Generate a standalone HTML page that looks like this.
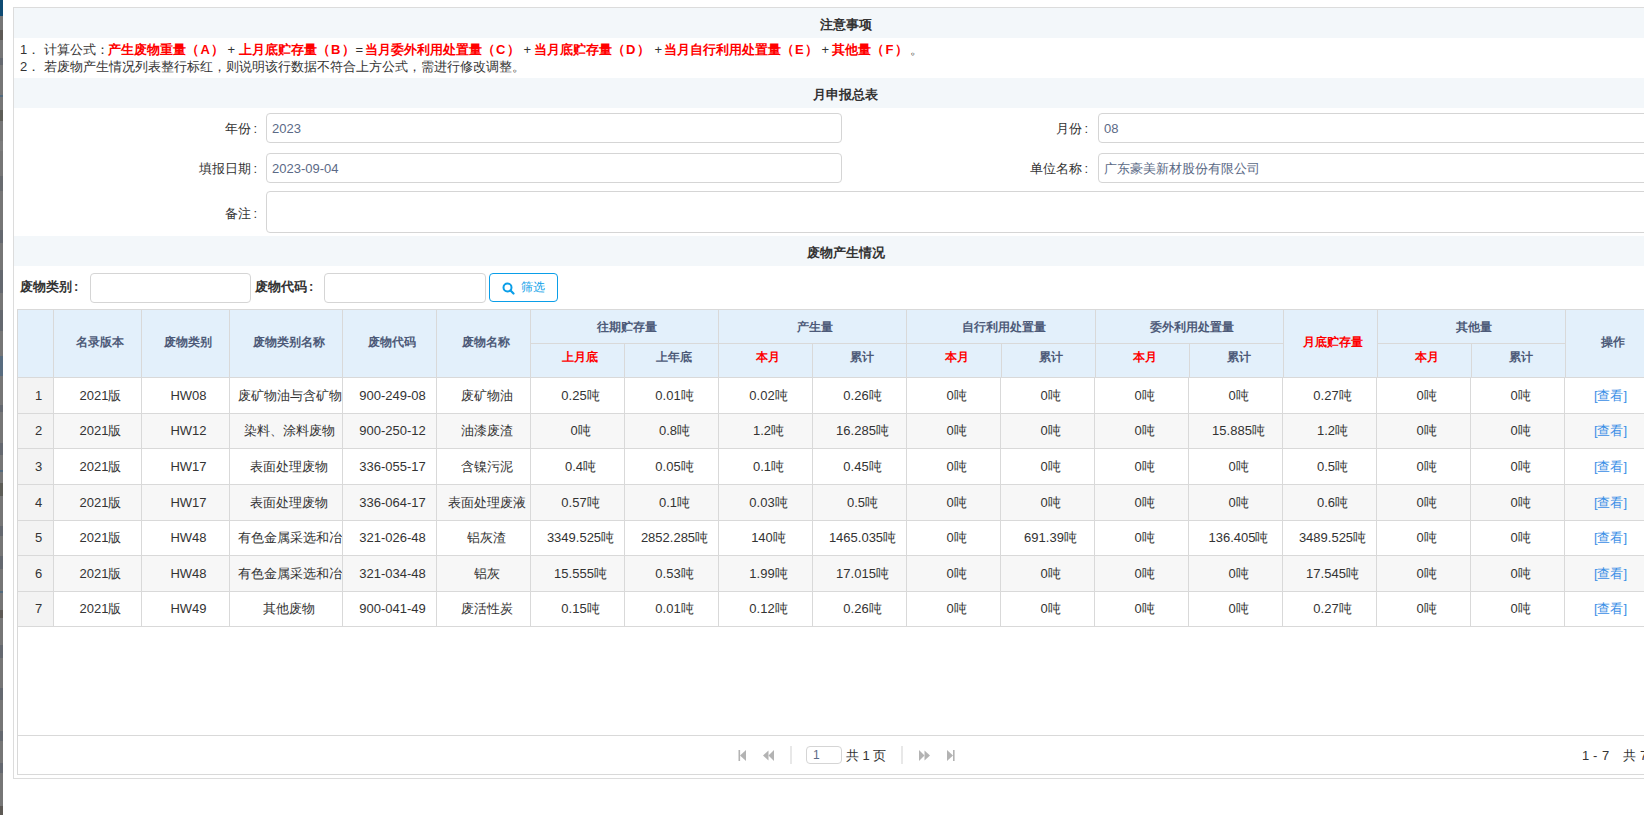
<!DOCTYPE html><html><head><meta charset="utf-8"><style>
*{box-sizing:border-box;margin:0;padding:0}
html,body{width:1644px;height:815px;overflow:hidden;background:#fff}
body{position:relative;font-family:"Liberation Sans",sans-serif;font-size:13px;color:#333333}
.a{position:absolute}
.band{position:absolute;left:14px;width:1663px;height:30px;background:#f3f7fa;text-align:center;font-weight:bold;font-size:13px;line-height:30px;padding-top:2px;color:#333}
.lbl{position:absolute;text-align:right;font-size:13px;line-height:30px;color:#333;white-space:nowrap}
.inp{position:absolute;border:1px solid #d5d5d5;border-radius:4px;background:#fff;color:#5b6a86;font-size:13px;line-height:28px;padding-left:5px;padding-top:1px;white-space:nowrap;overflow:hidden}
.c{position:absolute;text-align:center;white-space:nowrap;overflow:hidden}
.h{color:#4d5a78;font-weight:bold;font-size:12px}
.r{color:#ff0000}
.vl{position:absolute;width:1px;background:#d9d9d9}
.hl{position:absolute;height:1px;background:#d9d9d9}
.red{color:#ff0000;font-weight:bold}
</style></head><body>
<div class="a" style="left:0;top:0;width:3px;height:815px;background:#767676"></div>
<div class="a" style="left:0;top:0;width:3px;height:16px;background:#0f4b73"></div>
<div class="a" style="left:0;top:30px;width:3px;height:10px;background:#3a3026;opacity:.4"></div>
<div class="a" style="left:0;top:58px;width:3px;height:7px;background:#4a5566;opacity:.4"></div>
<div class="a" style="left:0;top:95px;width:3px;height:2px;background:#1e5a8a;opacity:.4"></div>
<div class="a" style="left:0;top:110px;width:3px;height:11px;background:#3a3a2a;opacity:.4"></div>
<div class="a" style="left:0;top:141px;width:3px;height:10px;background:#888;opacity:.4"></div>
<div class="a" style="left:0;top:176px;width:3px;height:15px;background:#555c66;opacity:.4"></div>
<div class="a" style="left:0;top:230px;width:3px;height:13px;background:#4a5566;opacity:.4"></div>
<div class="a" style="left:0;top:270px;width:3px;height:23px;background:#4a5566;opacity:.4"></div>
<div class="a" style="left:0;top:310px;width:3px;height:21px;background:#4a5566;opacity:.4"></div>
<div class="a" style="left:0;top:356px;width:3px;height:20px;background:#2e5f8e;opacity:.4"></div>
<div class="a" style="left:0;top:405px;width:3px;height:7px;background:#4a5566;opacity:.4"></div>
<div class="a" style="left:0;top:443px;width:3px;height:12px;background:#4a5566;opacity:.4"></div>
<div class="a" style="left:0;top:470px;width:3px;height:2px;background:#1e5a8a;opacity:.4"></div>
<div class="a" style="left:0;top:483px;width:3px;height:13px;background:#3a3a2a;opacity:.4"></div>
<div class="a" style="left:0;top:526px;width:3px;height:10px;background:#4a5566;opacity:.4"></div>
<div class="a" style="left:0;top:556px;width:3px;height:13px;background:#4a5566;opacity:.4"></div>
<div class="a" style="left:0;top:591px;width:3px;height:2px;background:#1e5a8a;opacity:.4"></div>
<div class="a" style="left:0;top:610px;width:3px;height:8px;background:#3a3026;opacity:.4"></div>
<div class="a" style="left:0;top:645px;width:3px;height:13px;background:#4a5566;opacity:.4"></div>
<div class="a" style="left:0;top:688px;width:3px;height:12px;background:#4a5566;opacity:.4"></div>
<div class="a" style="left:0;top:731px;width:3px;height:10px;background:#4a5566;opacity:.4"></div>
<div class="a" style="left:0;top:763px;width:3px;height:10px;background:#4a5566;opacity:.4"></div>
<div class="a" style="left:0;top:806px;width:3px;height:9px;background:#3a3026;opacity:.4"></div>
<div class="a" style="left:13px;top:7px;width:1665px;height:772px;border:1px solid #dcdcdc"></div>
<div class="band" style="top:8px">注意事项</div>
<div class="band" style="top:78px">月申报总表</div>
<div class="band" style="top:236px">废物产生情况</div>
<span class="a" style="left:20px;top:41px;line-height:17px;white-space:nowrap">1．</span>
<span class="a" style="left:43.5px;top:41px;line-height:17px;white-space:nowrap">计算公式：</span>
<span class="a red" style="left:108px;top:41px;line-height:17px;white-space:nowrap">产生废物重量<span style="letter-spacing:1.5px">（A）</span></span>
<span class="a" style="left:227.5px;top:41px;line-height:17px;white-space:nowrap">+</span>
<span class="a red" style="left:238.5px;top:41px;line-height:17px;white-space:nowrap">上月底贮存量<span style="letter-spacing:1.5px">（B）</span></span>
<span class="a" style="left:355.5px;top:41px;line-height:17px;white-space:nowrap">=</span>
<span class="a red" style="left:364.5px;top:41px;line-height:17px;white-space:nowrap">当月委外利用处置量<span style="letter-spacing:1.5px">（C）</span></span>
<span class="a" style="left:523.5px;top:41px;line-height:17px;white-space:nowrap">+</span>
<span class="a red" style="left:533.5px;top:41px;line-height:17px;white-space:nowrap">当月底贮存量<span style="letter-spacing:1.5px">（D）</span></span>
<span class="a" style="left:654.5px;top:41px;line-height:17px;white-space:nowrap">+</span>
<span class="a red" style="left:663.5px;top:41px;line-height:17px;white-space:nowrap">当月自行利用处置量<span style="letter-spacing:1.5px">（E）</span></span>
<span class="a" style="left:821.5px;top:41px;line-height:17px;white-space:nowrap">+</span>
<span class="a red" style="left:832px;top:41px;line-height:17px;white-space:nowrap">其他量<span style="letter-spacing:1.5px">（F）</span></span>
<span class="a" style="left:909.5px;top:41px;line-height:17px;white-space:nowrap">。</span>
<span class="a" style="left:20px;top:58px;line-height:17px;white-space:nowrap">2．</span>
<span class="a" style="left:43.5px;top:58px;line-height:17px;white-space:nowrap">若废物产生情况列表整行标红，则说明该行数据不符合上方公式，需进行修改调整。</span>
<div class="lbl" style="right:1387px;top:114px">年份<span style="margin-left:2px">:</span></div>
<div class="inp" style="left:266px;top:113px;width:576px;height:30px">2023</div>
<div class="lbl" style="right:556px;top:114px">月份<span style="margin-left:2px">:</span></div>
<div class="inp" style="left:1098px;top:113px;width:600px;height:30px">08</div>
<div class="lbl" style="right:1387px;top:154px">填报日期<span style="margin-left:2px">:</span></div>
<div class="inp" style="left:266px;top:153px;width:576px;height:30px">2023-09-04</div>
<div class="lbl" style="right:556px;top:154px">单位名称<span style="margin-left:2px">:</span></div>
<div class="inp" style="left:1098px;top:153px;width:600px;height:30px">广东豪美新材股份有限公司</div>
<div class="lbl" style="right:1387px;top:199px">备注<span style="margin-left:2px">:</span></div>
<div class="inp" style="left:266px;top:191px;width:1420px;height:42px"></div>
<div class="a" style="left:20px;top:272px;line-height:30px;font-weight:bold;font-size:13px">废物类别<span style="margin-left:2px">:</span></div>
<div class="inp" style="left:90px;top:273px;width:161px;height:30px"></div>
<div class="a" style="left:255px;top:272px;line-height:30px;font-weight:bold;font-size:13px">废物代码<span style="margin-left:2px">:</span></div>
<div class="inp" style="left:324px;top:273px;width:162px;height:30px"></div>
<div class="a" style="left:489px;top:273px;width:69px;height:29px;border:1px solid #0a9ee8;border-radius:4px;color:#0a9ee8;font-size:12px;line-height:27px"><svg class="a" style="left:12px;top:8px" width="13" height="13" viewBox="0 0 13 13"><circle cx="5.5" cy="5.5" r="4" fill="none" stroke="#0a9ee8" stroke-width="2"/><line x1="8.5" y1="8.5" x2="11.5" y2="11.5" stroke="#0a9ee8" stroke-width="2.2" stroke-linecap="round"/></svg><span class="a" style="left:31px;top:0">筛选</span></div>
<div class="a" style="left:17px;top:309px;width:1700px;height:466px;border:1px solid #d9d9d9"></div>
<div class="a" style="left:18px;top:310px;width:1700px;height:67px;background:#e3f0fb"></div>
<div class="hl" style="left:18px;top:377px;width:1700px"></div>
<div class="hl" style="left:531px;top:343px;width:187px"></div>
<div class="hl" style="left:719px;top:343px;width:187px"></div>
<div class="hl" style="left:907px;top:343px;width:188px"></div>
<div class="hl" style="left:1096px;top:343px;width:187px"></div>
<div class="hl" style="left:1378px;top:343px;width:187px"></div>
<div class="vl" style="left:53px;top:310px;height:67px"></div>
<div class="vl" style="left:141px;top:310px;height:67px"></div>
<div class="vl" style="left:229px;top:310px;height:67px"></div>
<div class="vl" style="left:342px;top:310px;height:67px"></div>
<div class="vl" style="left:436px;top:310px;height:67px"></div>
<div class="vl" style="left:530px;top:310px;height:67px"></div>
<div class="vl" style="left:718px;top:310px;height:67px"></div>
<div class="vl" style="left:906px;top:310px;height:67px"></div>
<div class="vl" style="left:1095px;top:310px;height:67px"></div>
<div class="vl" style="left:1283px;top:310px;height:67px"></div>
<div class="vl" style="left:1377px;top:310px;height:67px"></div>
<div class="vl" style="left:1565px;top:310px;height:67px"></div>
<div class="vl" style="left:624px;top:344px;height:33px"></div>
<div class="vl" style="left:812px;top:344px;height:33px"></div>
<div class="vl" style="left:1001px;top:344px;height:33px"></div>
<div class="vl" style="left:1189px;top:344px;height:33px"></div>
<div class="vl" style="left:1471px;top:344px;height:33px"></div>
<div class="c h" style="left:54px;top:309px;width:87px;height:67px;line-height:67px;padding-left:5px">名录版本</div>
<div class="c h" style="left:142px;top:309px;width:87px;height:67px;line-height:67px;padding-left:5px">废物类别</div>
<div class="c h" style="left:230px;top:309px;width:112px;height:67px;line-height:67px;padding-left:5px">废物类别名称</div>
<div class="c h" style="left:343px;top:309px;width:93px;height:67px;line-height:67px;padding-left:5px">废物代码</div>
<div class="c h" style="left:437px;top:309px;width:93px;height:67px;line-height:67px;padding-left:5px">废物名称</div>
<div class="c h" style="left:531px;top:311px;width:187px;height:33px;line-height:33px;padding-left:5px">往期贮存量</div>
<div class="c h r" style="left:531px;top:341px;width:93px;height:33px;line-height:33px;padding-left:5px">上月底</div>
<div class="c h" style="left:625px;top:341px;width:93px;height:33px;line-height:33px;padding-left:5px">上年底</div>
<div class="c h" style="left:719px;top:311px;width:187px;height:33px;line-height:33px;padding-left:5px">产生量</div>
<div class="c h r" style="left:719px;top:341px;width:93px;height:33px;line-height:33px;padding-left:5px">本月</div>
<div class="c h" style="left:813px;top:341px;width:93px;height:33px;line-height:33px;padding-left:5px">累计</div>
<div class="c h" style="left:907px;top:311px;width:188px;height:33px;line-height:33px;padding-left:5px">自行利用处置量</div>
<div class="c h r" style="left:907px;top:341px;width:94px;height:33px;line-height:33px;padding-left:5px">本月</div>
<div class="c h" style="left:1002px;top:341px;width:93px;height:33px;line-height:33px;padding-left:5px">累计</div>
<div class="c h" style="left:1096px;top:311px;width:187px;height:33px;line-height:33px;padding-left:5px">委外利用处置量</div>
<div class="c h r" style="left:1096px;top:341px;width:93px;height:33px;line-height:33px;padding-left:5px">本月</div>
<div class="c h" style="left:1190px;top:341px;width:93px;height:33px;line-height:33px;padding-left:5px">累计</div>
<div class="c h r" style="left:1284px;top:309px;width:93px;height:67px;line-height:67px;padding-left:5px">月底贮存量</div>
<div class="c h" style="left:1378px;top:311px;width:187px;height:33px;line-height:33px;padding-left:5px">其他量</div>
<div class="c h r" style="left:1378px;top:341px;width:93px;height:33px;line-height:33px;padding-left:5px">本月</div>
<div class="c h" style="left:1472px;top:341px;width:93px;height:33px;line-height:33px;padding-left:5px">累计</div>
<div class="c h" style="left:1566px;top:309px;width:88px;height:67px;line-height:67px;padding-left:5px">操作</div>
<div class="a" style="left:54px;top:378px;width:1700px;height:35px;background:#ffffff"></div>
<div class="a" style="left:18px;top:378px;width:35px;height:35px;background:#f3f3f3"></div>
<div class="c" style="left:24px;top:378px;width:29px;height:35px;line-height:35px">1</div>
<div class="c" style="left:54px;top:378px;width:87px;height:35px;line-height:35px;padding-left:6px">2021版</div>
<div class="c" style="left:142px;top:378px;width:87px;height:35px;line-height:35px;padding-left:6px">HW08</div>
<div class="c" style="left:230px;top:378px;width:112px;height:35px;line-height:35px;padding:0 2px 0 8px">废矿物油与含矿物油废物</div>
<div class="c" style="left:343px;top:378px;width:93px;height:35px;line-height:35px;padding-left:6px">900-249-08</div>
<div class="c" style="left:437px;top:378px;width:93px;height:35px;line-height:35px;padding-left:6px">废矿物油</div>
<div class="c" style="left:531px;top:378px;width:93px;height:35px;line-height:35px;padding-left:6px">0.25吨</div>
<div class="c" style="left:625px;top:378px;width:93px;height:35px;line-height:35px;padding-left:6px">0.01吨</div>
<div class="c" style="left:719px;top:378px;width:93px;height:35px;line-height:35px;padding-left:6px">0.02吨</div>
<div class="c" style="left:813px;top:378px;width:93px;height:35px;line-height:35px;padding-left:6px">0.26吨</div>
<div class="c" style="left:907px;top:378px;width:93px;height:35px;line-height:35px;padding-left:6px">0吨</div>
<div class="c" style="left:1001px;top:378px;width:93px;height:35px;line-height:35px;padding-left:6px">0吨</div>
<div class="c" style="left:1095px;top:378px;width:93px;height:35px;line-height:35px;padding-left:6px">0吨</div>
<div class="c" style="left:1189px;top:378px;width:93px;height:35px;line-height:35px;padding-left:6px">0吨</div>
<div class="c" style="left:1283px;top:378px;width:93px;height:35px;line-height:35px;padding-left:6px">0.27吨</div>
<div class="c" style="left:1377px;top:378px;width:93px;height:35px;line-height:35px;padding-left:6px">0吨</div>
<div class="c" style="left:1471px;top:378px;width:93px;height:35px;line-height:35px;padding-left:6px">0吨</div>
<div class="c" style="left:1564px;top:378px;width:93px;height:35px;line-height:35px;color:#3a8ee6">[查看]</div>
<div class="hl" style="left:18px;top:413px;width:1700px"></div>
<div class="a" style="left:54px;top:414px;width:1700px;height:34px;background:#f7f7f7"></div>
<div class="a" style="left:18px;top:414px;width:35px;height:34px;background:#f3f3f3"></div>
<div class="c" style="left:24px;top:414px;width:29px;height:34px;line-height:34px">2</div>
<div class="c" style="left:54px;top:414px;width:87px;height:34px;line-height:34px;padding-left:6px">2021版</div>
<div class="c" style="left:142px;top:414px;width:87px;height:34px;line-height:34px;padding-left:6px">HW12</div>
<div class="c" style="left:230px;top:414px;width:112px;height:34px;line-height:34px;padding:0 2px 0 8px">染料、涂料废物</div>
<div class="c" style="left:343px;top:414px;width:93px;height:34px;line-height:34px;padding-left:6px">900-250-12</div>
<div class="c" style="left:437px;top:414px;width:93px;height:34px;line-height:34px;padding-left:6px">油漆废渣</div>
<div class="c" style="left:531px;top:414px;width:93px;height:34px;line-height:34px;padding-left:6px">0吨</div>
<div class="c" style="left:625px;top:414px;width:93px;height:34px;line-height:34px;padding-left:6px">0.8吨</div>
<div class="c" style="left:719px;top:414px;width:93px;height:34px;line-height:34px;padding-left:6px">1.2吨</div>
<div class="c" style="left:813px;top:414px;width:93px;height:34px;line-height:34px;padding-left:6px">16.285吨</div>
<div class="c" style="left:907px;top:414px;width:93px;height:34px;line-height:34px;padding-left:6px">0吨</div>
<div class="c" style="left:1001px;top:414px;width:93px;height:34px;line-height:34px;padding-left:6px">0吨</div>
<div class="c" style="left:1095px;top:414px;width:93px;height:34px;line-height:34px;padding-left:6px">0吨</div>
<div class="c" style="left:1189px;top:414px;width:93px;height:34px;line-height:34px;padding-left:6px">15.885吨</div>
<div class="c" style="left:1283px;top:414px;width:93px;height:34px;line-height:34px;padding-left:6px">1.2吨</div>
<div class="c" style="left:1377px;top:414px;width:93px;height:34px;line-height:34px;padding-left:6px">0吨</div>
<div class="c" style="left:1471px;top:414px;width:93px;height:34px;line-height:34px;padding-left:6px">0吨</div>
<div class="c" style="left:1564px;top:414px;width:93px;height:34px;line-height:34px;color:#3a8ee6">[查看]</div>
<div class="hl" style="left:18px;top:448px;width:1700px"></div>
<div class="a" style="left:54px;top:449px;width:1700px;height:35px;background:#ffffff"></div>
<div class="a" style="left:18px;top:449px;width:35px;height:35px;background:#f3f3f3"></div>
<div class="c" style="left:24px;top:449px;width:29px;height:35px;line-height:35px">3</div>
<div class="c" style="left:54px;top:449px;width:87px;height:35px;line-height:35px;padding-left:6px">2021版</div>
<div class="c" style="left:142px;top:449px;width:87px;height:35px;line-height:35px;padding-left:6px">HW17</div>
<div class="c" style="left:230px;top:449px;width:112px;height:35px;line-height:35px;padding:0 2px 0 8px">表面处理废物</div>
<div class="c" style="left:343px;top:449px;width:93px;height:35px;line-height:35px;padding-left:6px">336-055-17</div>
<div class="c" style="left:437px;top:449px;width:93px;height:35px;line-height:35px;padding-left:6px">含镍污泥</div>
<div class="c" style="left:531px;top:449px;width:93px;height:35px;line-height:35px;padding-left:6px">0.4吨</div>
<div class="c" style="left:625px;top:449px;width:93px;height:35px;line-height:35px;padding-left:6px">0.05吨</div>
<div class="c" style="left:719px;top:449px;width:93px;height:35px;line-height:35px;padding-left:6px">0.1吨</div>
<div class="c" style="left:813px;top:449px;width:93px;height:35px;line-height:35px;padding-left:6px">0.45吨</div>
<div class="c" style="left:907px;top:449px;width:93px;height:35px;line-height:35px;padding-left:6px">0吨</div>
<div class="c" style="left:1001px;top:449px;width:93px;height:35px;line-height:35px;padding-left:6px">0吨</div>
<div class="c" style="left:1095px;top:449px;width:93px;height:35px;line-height:35px;padding-left:6px">0吨</div>
<div class="c" style="left:1189px;top:449px;width:93px;height:35px;line-height:35px;padding-left:6px">0吨</div>
<div class="c" style="left:1283px;top:449px;width:93px;height:35px;line-height:35px;padding-left:6px">0.5吨</div>
<div class="c" style="left:1377px;top:449px;width:93px;height:35px;line-height:35px;padding-left:6px">0吨</div>
<div class="c" style="left:1471px;top:449px;width:93px;height:35px;line-height:35px;padding-left:6px">0吨</div>
<div class="c" style="left:1564px;top:449px;width:93px;height:35px;line-height:35px;color:#3a8ee6">[查看]</div>
<div class="hl" style="left:18px;top:484px;width:1700px"></div>
<div class="a" style="left:54px;top:485px;width:1700px;height:35px;background:#f7f7f7"></div>
<div class="a" style="left:18px;top:485px;width:35px;height:35px;background:#f3f3f3"></div>
<div class="c" style="left:24px;top:485px;width:29px;height:35px;line-height:35px">4</div>
<div class="c" style="left:54px;top:485px;width:87px;height:35px;line-height:35px;padding-left:6px">2021版</div>
<div class="c" style="left:142px;top:485px;width:87px;height:35px;line-height:35px;padding-left:6px">HW17</div>
<div class="c" style="left:230px;top:485px;width:112px;height:35px;line-height:35px;padding:0 2px 0 8px">表面处理废物</div>
<div class="c" style="left:343px;top:485px;width:93px;height:35px;line-height:35px;padding-left:6px">336-064-17</div>
<div class="c" style="left:437px;top:485px;width:93px;height:35px;line-height:35px;padding-left:6px">表面处理废液</div>
<div class="c" style="left:531px;top:485px;width:93px;height:35px;line-height:35px;padding-left:6px">0.57吨</div>
<div class="c" style="left:625px;top:485px;width:93px;height:35px;line-height:35px;padding-left:6px">0.1吨</div>
<div class="c" style="left:719px;top:485px;width:93px;height:35px;line-height:35px;padding-left:6px">0.03吨</div>
<div class="c" style="left:813px;top:485px;width:93px;height:35px;line-height:35px;padding-left:6px">0.5吨</div>
<div class="c" style="left:907px;top:485px;width:93px;height:35px;line-height:35px;padding-left:6px">0吨</div>
<div class="c" style="left:1001px;top:485px;width:93px;height:35px;line-height:35px;padding-left:6px">0吨</div>
<div class="c" style="left:1095px;top:485px;width:93px;height:35px;line-height:35px;padding-left:6px">0吨</div>
<div class="c" style="left:1189px;top:485px;width:93px;height:35px;line-height:35px;padding-left:6px">0吨</div>
<div class="c" style="left:1283px;top:485px;width:93px;height:35px;line-height:35px;padding-left:6px">0.6吨</div>
<div class="c" style="left:1377px;top:485px;width:93px;height:35px;line-height:35px;padding-left:6px">0吨</div>
<div class="c" style="left:1471px;top:485px;width:93px;height:35px;line-height:35px;padding-left:6px">0吨</div>
<div class="c" style="left:1564px;top:485px;width:93px;height:35px;line-height:35px;color:#3a8ee6">[查看]</div>
<div class="hl" style="left:18px;top:520px;width:1700px"></div>
<div class="a" style="left:54px;top:521px;width:1700px;height:34px;background:#ffffff"></div>
<div class="a" style="left:18px;top:521px;width:35px;height:34px;background:#f3f3f3"></div>
<div class="c" style="left:24px;top:521px;width:29px;height:34px;line-height:34px">5</div>
<div class="c" style="left:54px;top:521px;width:87px;height:34px;line-height:34px;padding-left:6px">2021版</div>
<div class="c" style="left:142px;top:521px;width:87px;height:34px;line-height:34px;padding-left:6px">HW48</div>
<div class="c" style="left:230px;top:521px;width:112px;height:34px;line-height:34px;padding:0 2px 0 8px">有色金属采选和冶炼废物</div>
<div class="c" style="left:343px;top:521px;width:93px;height:34px;line-height:34px;padding-left:6px">321-026-48</div>
<div class="c" style="left:437px;top:521px;width:93px;height:34px;line-height:34px;padding-left:6px">铝灰渣</div>
<div class="c" style="left:531px;top:521px;width:93px;height:34px;line-height:34px;padding-left:6px">3349.525吨</div>
<div class="c" style="left:625px;top:521px;width:93px;height:34px;line-height:34px;padding-left:6px">2852.285吨</div>
<div class="c" style="left:719px;top:521px;width:93px;height:34px;line-height:34px;padding-left:6px">140吨</div>
<div class="c" style="left:813px;top:521px;width:93px;height:34px;line-height:34px;padding-left:6px">1465.035吨</div>
<div class="c" style="left:907px;top:521px;width:93px;height:34px;line-height:34px;padding-left:6px">0吨</div>
<div class="c" style="left:1001px;top:521px;width:93px;height:34px;line-height:34px;padding-left:6px">691.39吨</div>
<div class="c" style="left:1095px;top:521px;width:93px;height:34px;line-height:34px;padding-left:6px">0吨</div>
<div class="c" style="left:1189px;top:521px;width:93px;height:34px;line-height:34px;padding-left:6px">136.405吨</div>
<div class="c" style="left:1283px;top:521px;width:93px;height:34px;line-height:34px;padding-left:6px">3489.525吨</div>
<div class="c" style="left:1377px;top:521px;width:93px;height:34px;line-height:34px;padding-left:6px">0吨</div>
<div class="c" style="left:1471px;top:521px;width:93px;height:34px;line-height:34px;padding-left:6px">0吨</div>
<div class="c" style="left:1564px;top:521px;width:93px;height:34px;line-height:34px;color:#3a8ee6">[查看]</div>
<div class="hl" style="left:18px;top:555px;width:1700px"></div>
<div class="a" style="left:54px;top:556px;width:1700px;height:35px;background:#f7f7f7"></div>
<div class="a" style="left:18px;top:556px;width:35px;height:35px;background:#f3f3f3"></div>
<div class="c" style="left:24px;top:556px;width:29px;height:35px;line-height:35px">6</div>
<div class="c" style="left:54px;top:556px;width:87px;height:35px;line-height:35px;padding-left:6px">2021版</div>
<div class="c" style="left:142px;top:556px;width:87px;height:35px;line-height:35px;padding-left:6px">HW48</div>
<div class="c" style="left:230px;top:556px;width:112px;height:35px;line-height:35px;padding:0 2px 0 8px">有色金属采选和冶炼废物</div>
<div class="c" style="left:343px;top:556px;width:93px;height:35px;line-height:35px;padding-left:6px">321-034-48</div>
<div class="c" style="left:437px;top:556px;width:93px;height:35px;line-height:35px;padding-left:6px">铝灰</div>
<div class="c" style="left:531px;top:556px;width:93px;height:35px;line-height:35px;padding-left:6px">15.555吨</div>
<div class="c" style="left:625px;top:556px;width:93px;height:35px;line-height:35px;padding-left:6px">0.53吨</div>
<div class="c" style="left:719px;top:556px;width:93px;height:35px;line-height:35px;padding-left:6px">1.99吨</div>
<div class="c" style="left:813px;top:556px;width:93px;height:35px;line-height:35px;padding-left:6px">17.015吨</div>
<div class="c" style="left:907px;top:556px;width:93px;height:35px;line-height:35px;padding-left:6px">0吨</div>
<div class="c" style="left:1001px;top:556px;width:93px;height:35px;line-height:35px;padding-left:6px">0吨</div>
<div class="c" style="left:1095px;top:556px;width:93px;height:35px;line-height:35px;padding-left:6px">0吨</div>
<div class="c" style="left:1189px;top:556px;width:93px;height:35px;line-height:35px;padding-left:6px">0吨</div>
<div class="c" style="left:1283px;top:556px;width:93px;height:35px;line-height:35px;padding-left:6px">17.545吨</div>
<div class="c" style="left:1377px;top:556px;width:93px;height:35px;line-height:35px;padding-left:6px">0吨</div>
<div class="c" style="left:1471px;top:556px;width:93px;height:35px;line-height:35px;padding-left:6px">0吨</div>
<div class="c" style="left:1564px;top:556px;width:93px;height:35px;line-height:35px;color:#3a8ee6">[查看]</div>
<div class="hl" style="left:18px;top:591px;width:1700px"></div>
<div class="a" style="left:54px;top:592px;width:1700px;height:34px;background:#ffffff"></div>
<div class="a" style="left:18px;top:592px;width:35px;height:34px;background:#f3f3f3"></div>
<div class="c" style="left:24px;top:592px;width:29px;height:34px;line-height:34px">7</div>
<div class="c" style="left:54px;top:592px;width:87px;height:34px;line-height:34px;padding-left:6px">2021版</div>
<div class="c" style="left:142px;top:592px;width:87px;height:34px;line-height:34px;padding-left:6px">HW49</div>
<div class="c" style="left:230px;top:592px;width:112px;height:34px;line-height:34px;padding:0 2px 0 8px">其他废物</div>
<div class="c" style="left:343px;top:592px;width:93px;height:34px;line-height:34px;padding-left:6px">900-041-49</div>
<div class="c" style="left:437px;top:592px;width:93px;height:34px;line-height:34px;padding-left:6px">废活性炭</div>
<div class="c" style="left:531px;top:592px;width:93px;height:34px;line-height:34px;padding-left:6px">0.15吨</div>
<div class="c" style="left:625px;top:592px;width:93px;height:34px;line-height:34px;padding-left:6px">0.01吨</div>
<div class="c" style="left:719px;top:592px;width:93px;height:34px;line-height:34px;padding-left:6px">0.12吨</div>
<div class="c" style="left:813px;top:592px;width:93px;height:34px;line-height:34px;padding-left:6px">0.26吨</div>
<div class="c" style="left:907px;top:592px;width:93px;height:34px;line-height:34px;padding-left:6px">0吨</div>
<div class="c" style="left:1001px;top:592px;width:93px;height:34px;line-height:34px;padding-left:6px">0吨</div>
<div class="c" style="left:1095px;top:592px;width:93px;height:34px;line-height:34px;padding-left:6px">0吨</div>
<div class="c" style="left:1189px;top:592px;width:93px;height:34px;line-height:34px;padding-left:6px">0吨</div>
<div class="c" style="left:1283px;top:592px;width:93px;height:34px;line-height:34px;padding-left:6px">0.27吨</div>
<div class="c" style="left:1377px;top:592px;width:93px;height:34px;line-height:34px;padding-left:6px">0吨</div>
<div class="c" style="left:1471px;top:592px;width:93px;height:34px;line-height:34px;padding-left:6px">0吨</div>
<div class="c" style="left:1564px;top:592px;width:93px;height:34px;line-height:34px;color:#3a8ee6">[查看]</div>
<div class="hl" style="left:18px;top:626px;width:1700px"></div>
<div class="vl" style="left:53px;top:378px;height:248px"></div>
<div class="vl" style="left:141px;top:378px;height:248px"></div>
<div class="vl" style="left:229px;top:378px;height:248px"></div>
<div class="vl" style="left:342px;top:378px;height:248px"></div>
<div class="vl" style="left:436px;top:378px;height:248px"></div>
<div class="vl" style="left:530px;top:378px;height:248px"></div>
<div class="vl" style="left:624px;top:378px;height:248px"></div>
<div class="vl" style="left:718px;top:378px;height:248px"></div>
<div class="vl" style="left:812px;top:378px;height:248px"></div>
<div class="vl" style="left:906px;top:378px;height:248px"></div>
<div class="vl" style="left:1000px;top:378px;height:248px"></div>
<div class="vl" style="left:1094px;top:378px;height:248px"></div>
<div class="vl" style="left:1188px;top:378px;height:248px"></div>
<div class="vl" style="left:1282px;top:378px;height:248px"></div>
<div class="vl" style="left:1376px;top:378px;height:248px"></div>
<div class="vl" style="left:1470px;top:378px;height:248px"></div>
<div class="vl" style="left:1564px;top:378px;height:248px"></div>
<div class="hl" style="left:18px;top:735px;width:1700px"></div>
<svg class="a" style="left:737px;top:749px" width="12" height="13" viewBox="0 0 12 13"><rect x="1.5" y="1" width="1.6" height="11" fill="#b3b3b3"/><polygon points="9,1 9,12 3,6.5" fill="#b3b3b3"/></svg>
<svg class="a" style="left:762px;top:749px" width="14" height="13" viewBox="0 0 14 13"><polygon points="6.5,1.5 6.5,11.5 1,6.5" fill="#b3b3b3"/><polygon points="12,1 12,12 6.5,6.5" fill="#b3b3b3"/></svg>
<div class="a" style="left:790px;top:746px;width:2px;height:18px;background:#e8e8e8"></div>
<div class="a" style="left:806px;top:746px;width:36px;height:18px;border:1px solid #d5d5d5;border-radius:4px;color:#5b6a86;font-size:12px;line-height:16px;padding-left:6px">1</div>
<div class="a" style="left:846px;top:747px;line-height:18px;font-size:13px;color:#333;white-space:pre">共 1 页</div>
<div class="a" style="left:901px;top:746px;width:2px;height:18px;background:#e8e8e8"></div>
<svg class="a" style="left:918px;top:749px" width="14" height="13" viewBox="0 0 14 13"><polygon points="1,1 1,12 6.5,6.5" fill="#b3b3b3"/><polygon points="6.5,1.5 6.5,11.5 12,6.5" fill="#b3b3b3"/></svg>
<svg class="a" style="left:946px;top:749px" width="12" height="13" viewBox="0 0 12 13"><polygon points="1,1 1,12 7,6.5" fill="#b3b3b3"/><rect x="7" y="1" width="1.6" height="11" fill="#b3b3b3"/></svg>
<div class="a" style="left:1582px;top:747px;line-height:18px;font-size:13px;color:#333">1</div>
<div class="a" style="left:1593px;top:747px;line-height:18px;font-size:13px;color:#333">-</div>
<div class="a" style="left:1602px;top:747px;line-height:18px;font-size:13px;color:#333">7</div>
<div class="a" style="left:1623px;top:747px;line-height:18px;font-size:13px;color:#333">共</div>
<div class="a" style="left:1640px;top:747px;line-height:18px;font-size:13px;color:#333">7</div>
<div class="a" style="left:1651px;top:747px;line-height:18px;font-size:13px;color:#333">条</div>
</body></html>
